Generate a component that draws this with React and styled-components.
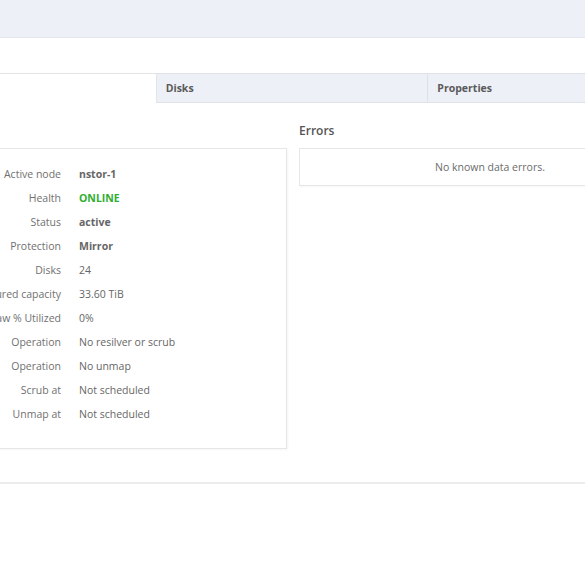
import React from 'react';
import styled, { createGlobalStyle } from 'styled-components';

const GlobalStyle = createGlobalStyle`
  html, body {
    margin: 0;
    padding: 0;
    background: #fff;
    overflow: hidden;
  }
  body {
    font-family: "Open Sans", "Noto Sans", sans-serif;
    color: #555;
  }
`;

const Page = styled.div`
  width: 585px;
  height: 563px;
  overflow: hidden;
`;

const TopBar = styled.div`
  height: 37px;
  background: #eef0f8;
  border-bottom: 1px solid #e3e5ee;
`;

const Content = styled.div`
  margin-left: -116px;
  width: 816px;
  padding-top: 35px;
`;

const TabRow = styled.div`
  display: flex;
  height: 30px;
`;

const Tab = styled.div`
  flex: 1;
  display: flex;
  align-items: center;
  padding-left: 9px;
  font-size: 10.5px;
  font-weight: 700;
  color: #5a5a5a;
  background: ${({ active }) => (active ? '#fff' : '#eef0f8')};
  border: 1px solid ${({ active }) => (active ? '#e4e4e4' : '#dfe1ea')};
  border-bottom: ${({ active }) => (active ? 'none' : '1px solid #dfe1ea')};
  border-left: ${({ first }) => (first ? '1px solid #e4e4e4' : 'none')};
`;

const Columns = styled.div`
  display: grid;
  grid-template-columns: 403px 402px;
  column-gap: 12px;
  padding-top: 16px;
`;

const Heading = styled.div`
  height: 22px;
  margin: 1px 0 6px;
  font-size: 12px;
  font-weight: 600;
  color: #555;
  line-height: 22px;
`;

const Panel = styled.div`
  border: 1px solid #e6e6e6;
  box-shadow: 1px 1px 2px rgba(0, 0, 0, 0.04);
  padding: ${({ pad }) => pad || '13px 0 22px'};
`;

const InfoGrid = styled.div`
  display: grid;
  grid-template-columns: 176px 1fr;
  column-gap: 18px;
  grid-auto-rows: 24px;
  font-size: 10.5px;
`;

const Label = styled.div`
  text-align: right;
  color: #707070;
  line-height: 24px;
`;

const Value = styled.div`
  line-height: 24px;
  color: ${({ tone }) => (tone === 'ok' ? '#2fae2f' : '#666')};
  font-weight: ${({ bold }) => (bold ? 700 : 400)};
`;

const EmptyNote = styled.div`
  text-align: center;
  font-size: 10.5px;
  color: #6b6b6b;
  padding-right: 20px;
`;

const Divider = styled.div`
  height: 2px;
  background: #ececec;
  margin-top: 33px;
`;

const rows = [
  { label: 'Active node', value: 'nstor-1', bold: true },
  { label: 'Health', value: 'ONLINE', bold: true, tone: 'ok' },
  { label: 'Status', value: 'active', bold: true },
  { label: 'Protection', value: 'Mirror', bold: true },
  { label: 'Disks', value: '24' },
  { label: 'Configured capacity', value: '33.60 TiB' },
  { label: 'Raw % Utilized', value: '0%' },
  { label: 'Operation', value: 'No resilver or scrub' },
  { label: 'Operation', value: 'No unmap' },
  { label: 'Scrub at', value: 'Not scheduled' },
  { label: 'Unmap at', value: 'Not scheduled' },
];

const App = () => (
  <Page>
    <GlobalStyle />
    <TopBar />
    <Content>
      <TabRow>
        <Tab active first>General</Tab>
        <Tab>Disks</Tab>
        <Tab>Properties</Tab>
      </TabRow>
      <Columns>
        <div>
          <Heading>Summary</Heading>
          <Panel>
            <InfoGrid>
              {rows.map((r, i) => (
                <React.Fragment key={i}>
                  <Label>{r.label}</Label>
                  <Value bold={r.bold} tone={r.tone}>{r.value}</Value>
                </React.Fragment>
              ))}
            </InfoGrid>
          </Panel>
        </div>
        <div>
          <Heading>Errors</Heading>
          <Panel pad="11px 0 11px">
            <EmptyNote>No known data errors.</EmptyNote>
          </Panel>
        </div>
      </Columns>
    </Content>
    <Divider />
  </Page>
);

export default App;
